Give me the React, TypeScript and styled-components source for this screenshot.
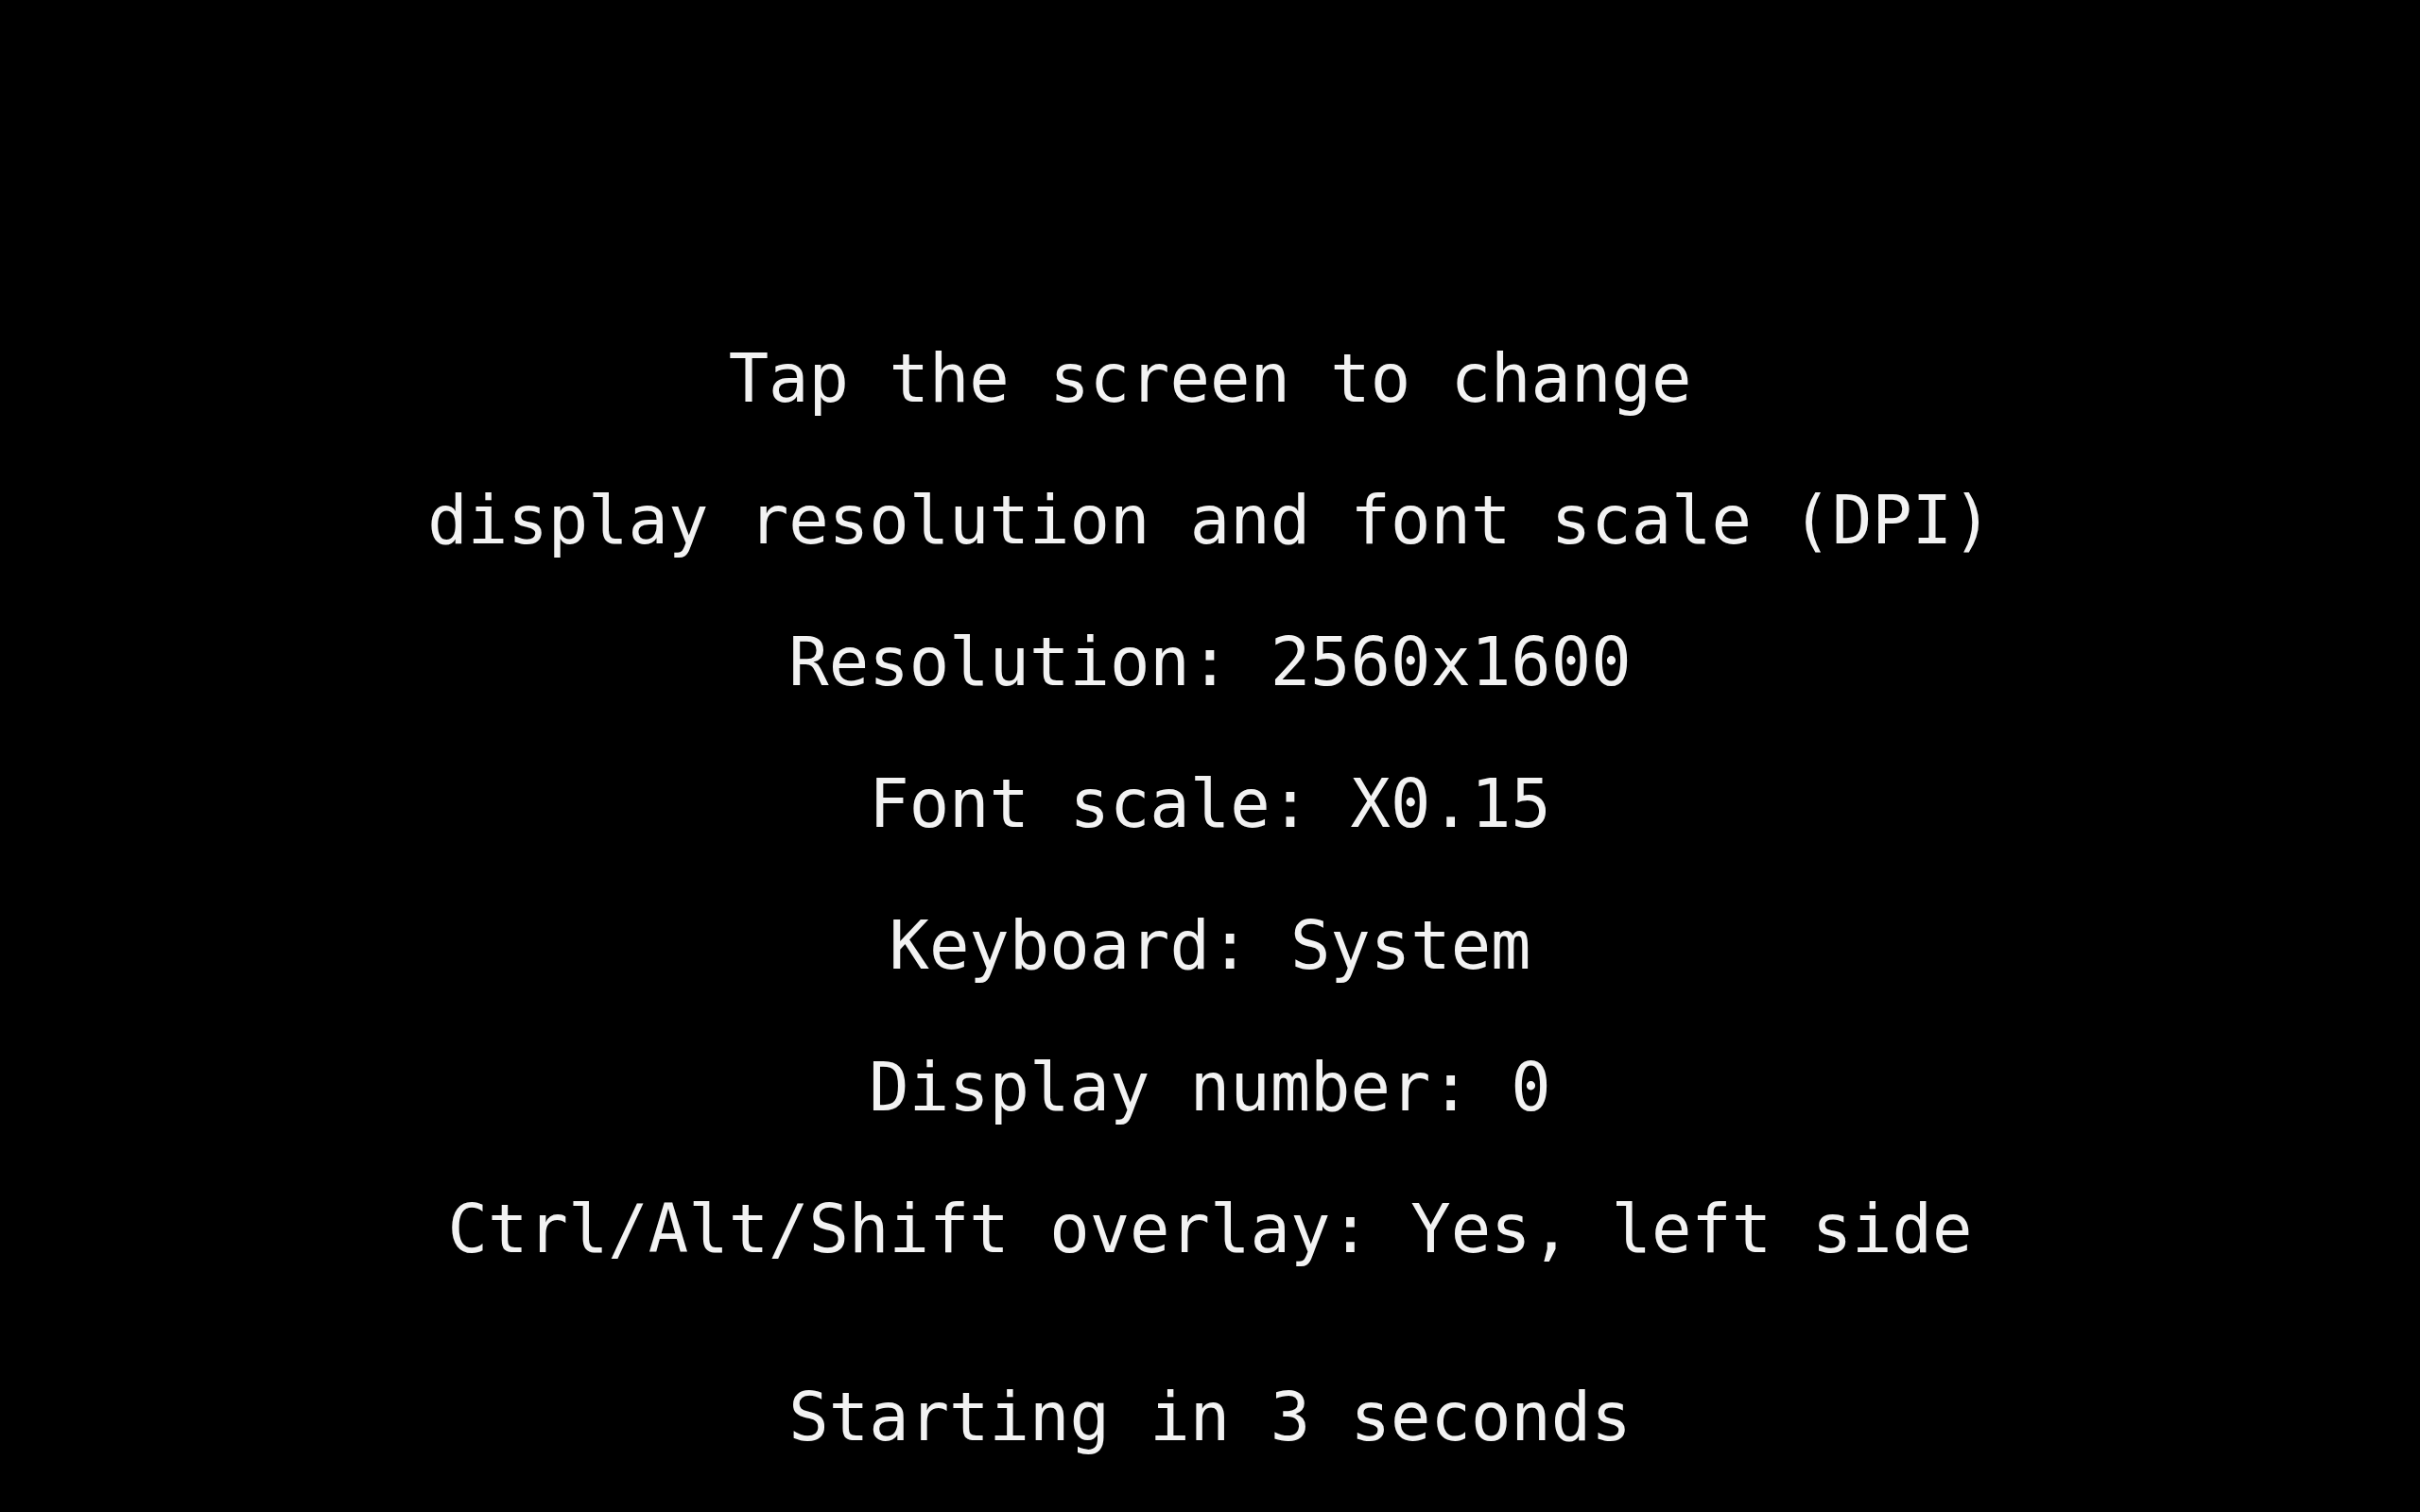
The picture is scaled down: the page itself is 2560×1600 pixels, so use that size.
import React from "react";
import styled, { createGlobalStyle } from "styled-components";

const GlobalStyle = createGlobalStyle`
  html, body {
    margin: 0;
    padding: 0;
    background: #000;
  }
  body {
    width: 2560px;
    height: 1600px;
    overflow: hidden;
  }
`;

const infoLines = [
  "Tap the screen to change",
  "display resolution and font scale (DPI)",
  "Resolution: 2560x1600",
  "Font scale: X0.15",
  "Keyboard: System",
  "Display number: 0",
  "Ctrl/Alt/Shift overlay: Yes, left side",
];

const App: React.FC = () => {
  return (
    <>
      <GlobalStyle />
      <Screen>
        {infoLines.map((line) => (
          <Line key={line}>{line}</Line>
        ))}
        <Line spaced>Starting in 3 seconds</Line>
      </Screen>
    </>
  );
};

export default App;

const Screen = styled.div`
  width: 2560px;
  height: 1600px;
  box-sizing: border-box;
  padding-top: 326px;
  background: #000;
  display: flex;
  flex-direction: column;
  align-items: center;
`;

const Line = styled.div<{ spaced?: boolean }>`
  font-family: "DejaVu Sans Mono", "Liberation Mono", monospace;
  font-size: 70.5px;
  line-height: 150px;
  color: #f2f2f2;
  white-space: pre;
  margin-top: ${(p) => (p.spaced ? "49px" : "0")};
`;
